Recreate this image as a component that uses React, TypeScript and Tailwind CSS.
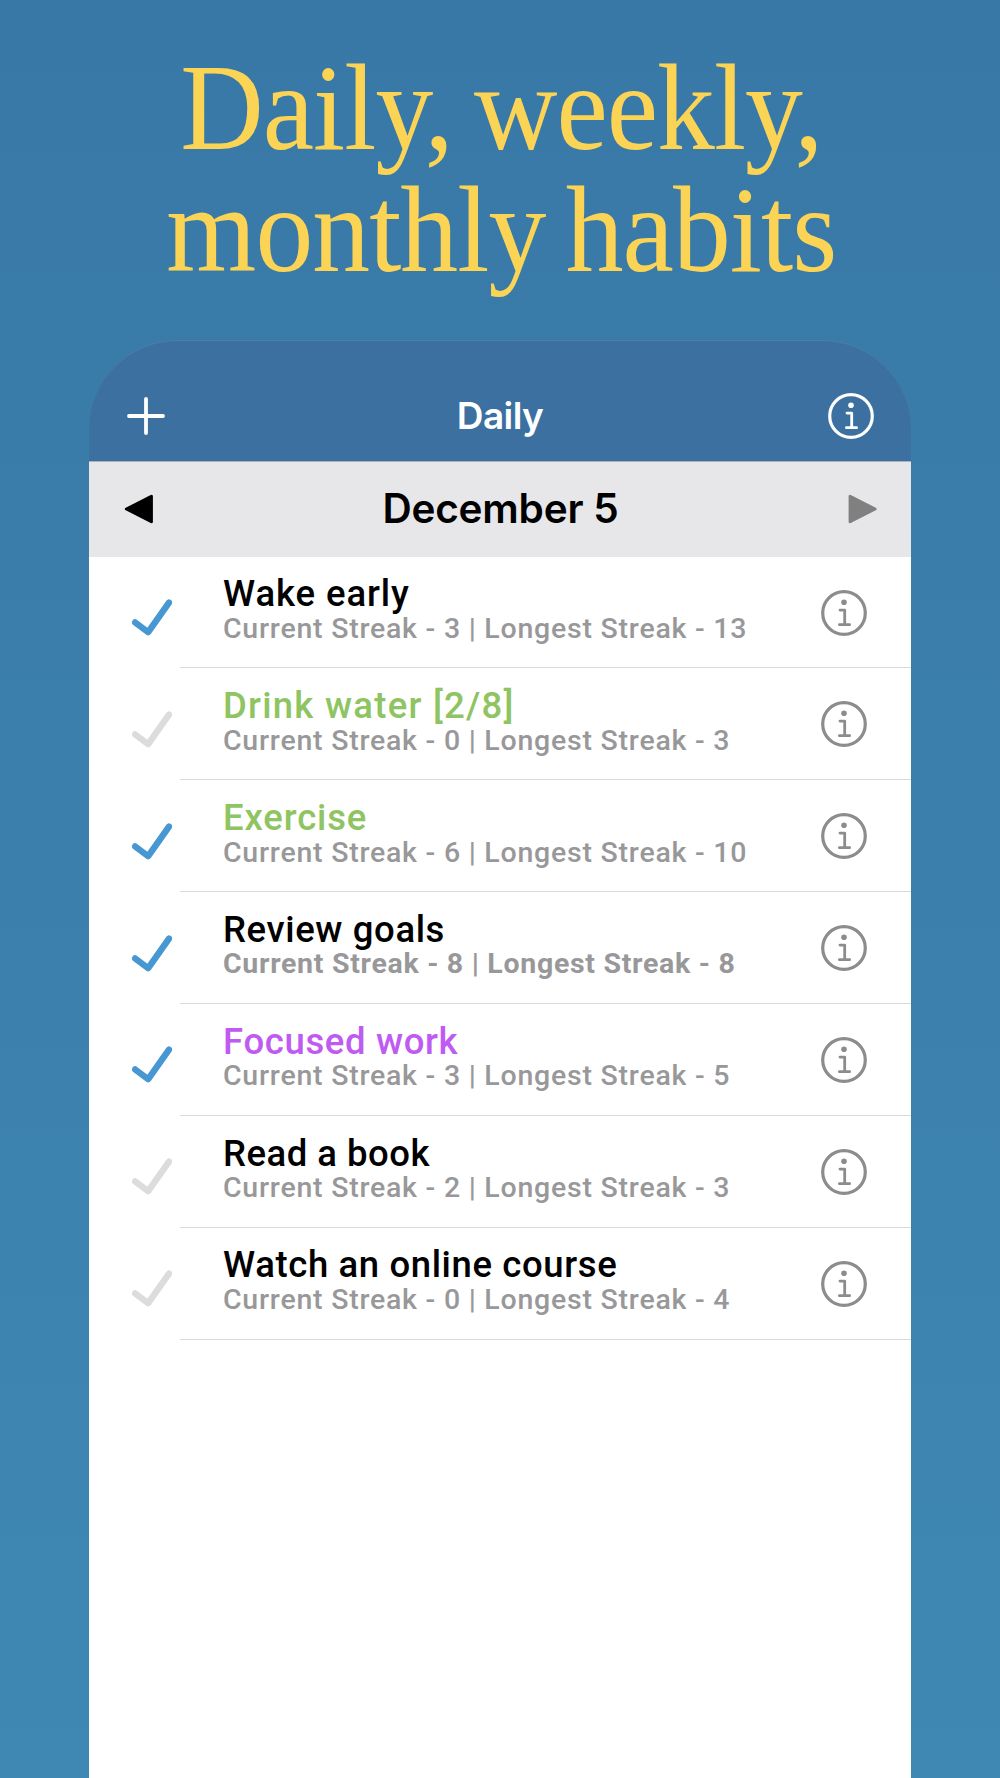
type Habit = {
  name: string;
  done: boolean;
  current: number;
  longest: number;
  color?: string;
  tracking: string;
  best?: boolean;
};

const habits: Habit[] = [
  { name: "Wake early", done: true, current: 3, longest: 13, tracking: "tracking-[0.9px]" },
  { name: "Drink water [2/8]", done: false, current: 0, longest: 3, color: "text-[#8fc463]", tracking: "tracking-[1.25px]" },
  { name: "Exercise", done: true, current: 6, longest: 10, color: "text-[#8fc463]", tracking: "tracking-[0.85px]" },
  { name: "Review goals", done: true, current: 8, longest: 8, tracking: "tracking-[0.62px]", best: true },
  { name: "Focused work", done: true, current: 3, longest: 5, color: "text-[#bf5af2]", tracking: "tracking-[0.65px]" },
  { name: "Read a book", done: false, current: 2, longest: 3, tracking: "tracking-[0.5px]" },
  { name: "Watch an online course", done: false, current: 0, longest: 4, tracking: "tracking-[0.62px]" },
];

function InfoIcon({ className }: { className: string }) {
  return (
    <svg viewBox="0 0 48 48" fill="none" stroke="currentColor" className={`w-12 h-12 shrink-0 ${className}`}>
      <circle cx="24" cy="24" r="21.3" strokeWidth="3.2" />
      <circle cx="24" cy="13.3" r="2.8" fill="currentColor" stroke="none" />
      <path d="M20 21.1h4.7v14.5M19.4 35.7h10.2" strokeWidth="2.8" strokeLinecap="round" strokeLinejoin="round" />
    </svg>
  );
}

function CheckIcon({ done }: { done: boolean }) {
  return (
    <svg viewBox="0 0 40 38" fill="none" className={`w-10 h-[38px] ${done ? "text-[#4797d3]" : "text-[#dcdcdc]"}`}>
      <path d="M3.2 23.5 16.2 33.2 37 3.6" stroke="currentColor" strokeWidth="6.4" strokeLinecap="round" strokeLinejoin="round" />
    </svg>
  );
}

function HabitRow({ habit }: { habit: Habit }) {
  return (
    <li className="flex h-[111.86px]">
      <div className="w-[91px] shrink-0 pl-[43px] pt-[42.5px]">
        <CheckIcon done={habit.done} />
      </div>
      <div className="flex flex-1 justify-between border-b border-[#dadada] pl-[43px] pr-[43px]">
        <div className="pt-[17.8px] whitespace-nowrap">
          <h2 className={`text-[36.5px] leading-[39.5px] font-medium ${habit.tracking} ${habit.color ?? "text-black"}`}>
            {habit.name}
          </h2>
          <p
            className={`text-[28.5px] leading-[30px] text-[#98989a] ${
              habit.best ? "font-bold tracking-[0.7px]" : "font-medium tracking-[0.76px]"
            }`}
          >
            Current Streak - {habit.current} | Longest Streak - {habit.longest}
          </p>
        </div>
        <InfoIcon className="mt-8 text-[#8c8c8c]" />
      </div>
    </li>
  );
}

export default function App() {
  return (
    <div className="flex h-[1778px] w-[1000px] flex-col items-center overflow-hidden bg-linear-to-b from-[#3878a6] to-[#3f88b4] font-['Roboto',sans-serif]">
      <h1 className="h-[340px] shrink-0 pt-[47px] pl-0.5 text-center font-['Liberation_Serif',serif] text-[122px] leading-[122px] tracking-[-1px] whitespace-nowrap text-[#fbd455]">
        <span className="block scale-x-[0.947] [word-spacing:-7px]">Daily, weekly,</span>
        <span className="block scale-x-[0.948] [word-spacing:-8px]">monthly habits</span>
      </h1>

      <main className="flex w-[822px] flex-1 flex-col">
        {/* Nav bar */}
        <header className="flex h-[121px] shrink-0 items-center justify-between rounded-t-[88px] bg-[#3b70a0] pt-[30px] pr-[36px] pl-[38px] text-white shadow-[inset_0_1px_0_#4c80a9]">
          <svg viewBox="0 0 38 38" stroke="currentColor" className="h-[38px] w-[38px]">
            <path d="M19 2v34M2 19h34" strokeWidth="3.8" strokeLinecap="round" />
          </svg>
          <span className="pl-2 font-['Inter',sans-serif] text-[37px] leading-[44px] font-semibold tracking-[-0.6px]">Daily</span>
          <InfoIcon className="" />
        </header>

        {/* Date switcher */}
        <div className="flex h-[95.5px] shrink-0 items-center justify-between border-t border-[#aeb3b9] bg-[#e7e7e9] px-[34px] pb-px">
          <svg viewBox="0 0 32 30" className="h-[30px] w-8 text-black">
            <path d="M3.4 15 28.4 2.3v25.4z" fill="currentColor" stroke="currentColor" strokeWidth="3" strokeLinejoin="round" />
          </svg>
          <span className="font-['Inter',sans-serif] text-[40.5px] leading-[48px] font-semibold tracking-[-0.2px] text-black">
            December 5
          </span>
          <svg viewBox="0 0 32 30" className="-mr-px h-[30px] w-8 text-[#808080]">
            <path d="M29.1 15 4.1 2.3v25.4z" fill="currentColor" stroke="currentColor" strokeWidth="3" strokeLinejoin="round" />
          </svg>
        </div>

        <ul className="flex-1 bg-white">
          {habits.map((habit) => (
            <HabitRow key={habit.name} habit={habit} />
          ))}
        </ul>
      </main>
    </div>
  );
}
